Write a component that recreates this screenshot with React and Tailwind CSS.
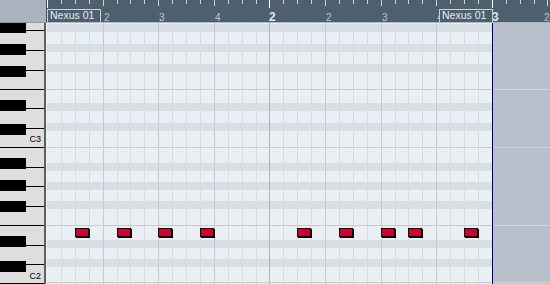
const S = 13.9;
const px = (k) => Math.round(k * S);

const BANDS = [24, 44, 64, 103, 123, 163, 182, 201, 240, 259];
const HLINES = [89, 147, 225, 282];
const BLACK_KEYS = [22, 44, 66, 100, 124, 158, 180, 201, 236, 261];
const KEY_LINES = [30, 50, 70, 108, 128, 167, 186, 206, 245, 264];
const FULL_LINES = [89, 147, 225, 283];
const NOTES = [2, 5, 8, 11, 18, 21, 24, 26, 30];

function Keyboard() {
  return (
    <svg width="47" height="261" className="block" shapeRendering="crispEdges">
      <rect x="0" y="0" width="44" height="261" fill="#dedede" />
      {BLACK_KEYS.map((y) => (
        <rect key={y} x="0" y={y - 23} width="26" height="11" fill="#000" />
      ))}
      {KEY_LINES.map((y) => (
        <rect key={y} x="26" y={y - 23} width="18" height="1" fill="#000" />
      ))}
      {FULL_LINES.map((y) => (
        <rect key={y} x="0" y={y - 23} width="44" height="1" fill="#000" />
      ))}
      <rect x="44" y="0" width="2" height="261" fill="#55616d" />
      <rect x="46" y="0" width="1" height="261" fill="#f2f2cc" />
    </svg>
  );
}

function Ruler() {
  const ticks = [];
  for (let k = 0; k <= 36; k++) {
    const x = px(k);
    if (x > 502) break;
    const isBar = k % 16 === 0;
    const isBeat = k % 4 === 0;
    ticks.push(
      <rect
        key={k}
        x={x}
        y={0}
        width={1}
        height={isBar ? 8 : isBeat ? 6 : 4}
        fill={isBar ? "#ffffff" : "#c9d2da"}
      />
    );
  }
  const beats = [
    [4, "2", px(4) + 1],
    [8, "3", px(8) + 1],
    [12, "4", px(12) + 1],
    [20, "2", px(20) + 1],
    [24, "3", px(24) + 1],
    [28, "4", px(28) + 1],
    [36, "2", 497],
  ];
  const bars = [
    [16, "2"],
    [32, "3"],
  ];
  return (
    <div className="relative h-[23px] bg-[#4e5f6e] border-b border-[#aeb8c2] overflow-hidden">
      <svg width="503" height="22" className="absolute left-0 top-0" shapeRendering="crispEdges">
        {ticks}
      </svg>
      {beats.map(([k, t, left]) => (
        <span
          key={k}
          className="absolute top-[13px] text-[10px] leading-none text-[#bcc6ce]"
          style={{ left }}
        >
          {t}
        </span>
      ))}
      {bars.map(([k, t]) => (
        <span
          key={k}
          className="absolute top-[11px] text-[12px] font-bold leading-none text-[#dbe7ef]"
          style={{ left: px(k) }}
        >
          {t}
        </span>
      ))}
      <div className="absolute left-0 top-[9px] w-[54px] h-[14px] border border-b-0 border-[#c6d4dc] bg-[#4e5f6e] pl-[2px] text-[10.5px] leading-[11px] text-[#e6edf3] whitespace-nowrap">
        Nexus 01
      </div>
      <div className="absolute left-[392px] top-[9px] w-[54px] h-[14px] border border-b-0 border-[#c6d4dc] bg-[#4e5f6e] pl-[2px] text-[10.5px] leading-[11px] text-[#e6edf3] whitespace-nowrap">
        Nexus 01
      </div>
    </div>
  );
}

function Grid() {
  const vlines = [];
  for (let k = 1; k < 32; k++) {
    const x = px(k);
    const color = k === 16 ? "#aeb3b9" : k % 4 === 0 ? "#c6cad0" : "#d8dce1";
    vlines.push(<rect key={k} x={x} y={0} width={1} height={261} fill={color} />);
  }
  return (
    <div className="relative flex-1">
      <svg width="503" height="261" className="block" shapeRendering="crispEdges">
        <rect x="0" y="0" width="445" height="261" fill="#eaeff4" />
        {BANDS.map((y) => (
          <rect key={y} x="0" y={y - 23} width="445" height="8" fill="#d6dee6" />
        ))}
        {vlines}
        {HLINES.map((y) => (
          <rect key={y} x="0" y={y - 23} width="445" height="1" fill="#c8ccd2" />
        ))}
        <rect x="445" y="0" width="1" height="261" fill="#000080" />
        <rect x="446" y="0" width="57" height="261" fill="#b7c0cb" />
        {HLINES.map((y) => (
          <rect key={"g" + y} x="446" y={y - 23} width="57" height="1" fill="#cfd3d8" />
        ))}
      </svg>
      {NOTES.map((k) => (
        <div
          key={k}
          className="absolute top-[205px] w-[14px] h-[9px] bg-[#cc0033] border border-black shadow-[1px_1px_0_#000]"
          style={{ left: px(k) }}
        />
      ))}
    </div>
  );
}

export default function App() {
  return (
    <div className="w-[550px] h-[284px] flex overflow-hidden bg-[#eaeff4] font-['Liberation_Sans',Arial,sans-serif]">
      <div className="w-[47px] shrink-0 flex flex-col">
        <div className="h-[23px] flex border-b border-[#8e98a2]">
          <div className="flex-1 bg-[#aab3bd]" />
          <div className="w-px bg-[#3e4c58]" />
        </div>
        <div className="relative flex-1">
          <Keyboard />
          <span className="absolute right-[6px] top-[112px] text-[9px] leading-none text-black">C3</span>
          <span className="absolute right-[6px] top-[249px] text-[9px] leading-none text-black">C2</span>
        </div>
      </div>
      <div className="flex-1 flex flex-col">
        <Ruler />
        <Grid />
      </div>
    </div>
  );
}
